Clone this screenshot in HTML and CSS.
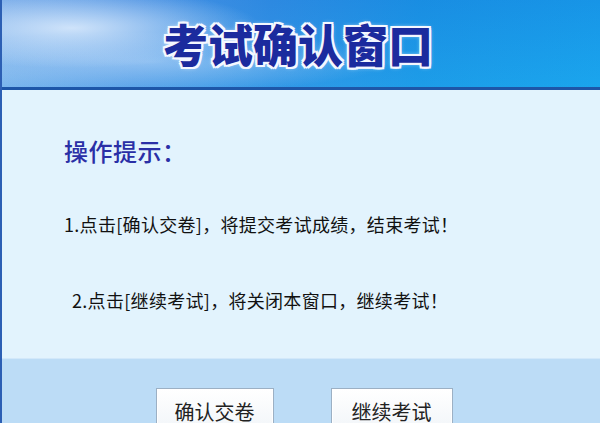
FILE: index.html
```html
<!DOCTYPE html>
<html lang="zh-CN">
<head>
<meta charset="utf-8">
<title>考试确认窗口</title>
<link rel="stylesheet" href="styles.css">
</head>
<body>
<div class="window">
  <header class="header">
    <h1 class="title">考试确认窗口</h1>
  </header>
  <main class="content">
    <h2 class="tips-title">操作提示：</h2>
    <p class="tip tip-1">1.点击[确认交卷]，将提交考试成绩，结束考试！</p>
    <p class="tip tip-2">2.点击[继续考试]，将关闭本窗口，继续考试！</p>
  </main>
  <footer class="footer">
    <button class="btn btn-confirm" type="button">确认交卷</button>
    <button class="btn btn-continue" type="button">继续考试</button>
  </footer>
</div>
</body>
</html>
```

FILE: styles.css
```css
html, body {
  margin: 0;
  padding: 0;
}

body {
  width: 600px;
  height: 423px;
  overflow: hidden;
  font-family: "Noto Sans CJK SC", "Noto Sans", sans-serif;
  background: #bcdcf6;
}

.window {
  display: flex;
  flex-direction: column;
  height: 423px;
  border-left: 2px solid #2c5fb4;
  box-sizing: border-box;
}

.header {
  height: 87px;
  flex: none;
  border-bottom: 3px solid #1d56a8;
  display: flex;
  align-items: center;
  justify-content: center;
  background:
    radial-gradient(ellipse 190px 40px at 70px 28px, rgba(235, 244, 255, 0.8), rgba(235, 244, 255, 0) 100%),
    radial-gradient(ellipse 240px 30px at 150px 62px, rgba(220, 236, 255, 0.45), rgba(220, 236, 255, 0) 100%),
    linear-gradient(to bottom, rgba(20, 110, 215, 0.25) 0%, rgba(40, 185, 245, 0.15) 100%),
    linear-gradient(to right, #8ab6ec 0%, #5c9ce6 22%, #3592e4 45%, #1b98e6 70%, #18a2ec 100%);
}

.title {
  margin: 0 6px 0 0;
  font-size: 45px;
  font-weight: 900;
  line-height: 1;
  color: #1b2b9e;
  text-shadow:
    2px 0 0 #f4f8ff, -2px 0 0 #f4f8ff, 0 2px 0 #f4f8ff, 0 -2px 0 #f4f8ff,
    2px 2px 0 #f4f8ff, -2px -2px 0 #f4f8ff, 2px -2px 0 #f4f8ff, -2px 2px 0 #f4f8ff,
    0 0 5px #ffffff;
}

.content {
  flex: 1;
  background: #e2f3fd;
  padding: 46px 0 0 62px;
  box-sizing: border-box;
}

.tips-title {
  margin: 0;
  font-size: 24px;
  line-height: 30px;
  font-weight: 500;
  letter-spacing: 0.5px;
  color: #2a2fa6;
}

.tip {
  margin: 0;
  font-size: 18px;
  line-height: 24px;
  letter-spacing: 0.3px;
  color: #111111;
}

.tip-1 {
  margin-top: 46px;
}

.tip-2 {
  margin-top: 52px;
  padding-left: 8px;
}

.footer {
  height: 65px;
  flex: none;
  background: #bcdcf6;
  border-top: 1px solid #d2e8fa;
  box-sizing: border-box;
  display: flex;
  align-items: flex-start;
  justify-content: center;
  gap: 57px;
  padding: 29px 0 0 6px;
}

.btn {
  height: 35px;
  padding: 12px 0 0;
  box-sizing: border-box;
  font-family: "Noto Sans CJK SC", sans-serif;
  font-size: 20px;
  line-height: 20px;
  font-weight: 400;
  color: #222222;
  background: linear-gradient(to bottom, #ffffff 0%, #f4f7fa 100%);
  border: 1px solid #9cb0c4;
  border-bottom: none;
  box-shadow: inset 0 1px 0 #ffffff, inset 1px 0 0 #ffffff, inset -1px 0 0 #ffffff;
  text-align: center;
}

.btn-confirm {
  width: 118px;
}

.btn-continue {
  width: 122px;
}
```
